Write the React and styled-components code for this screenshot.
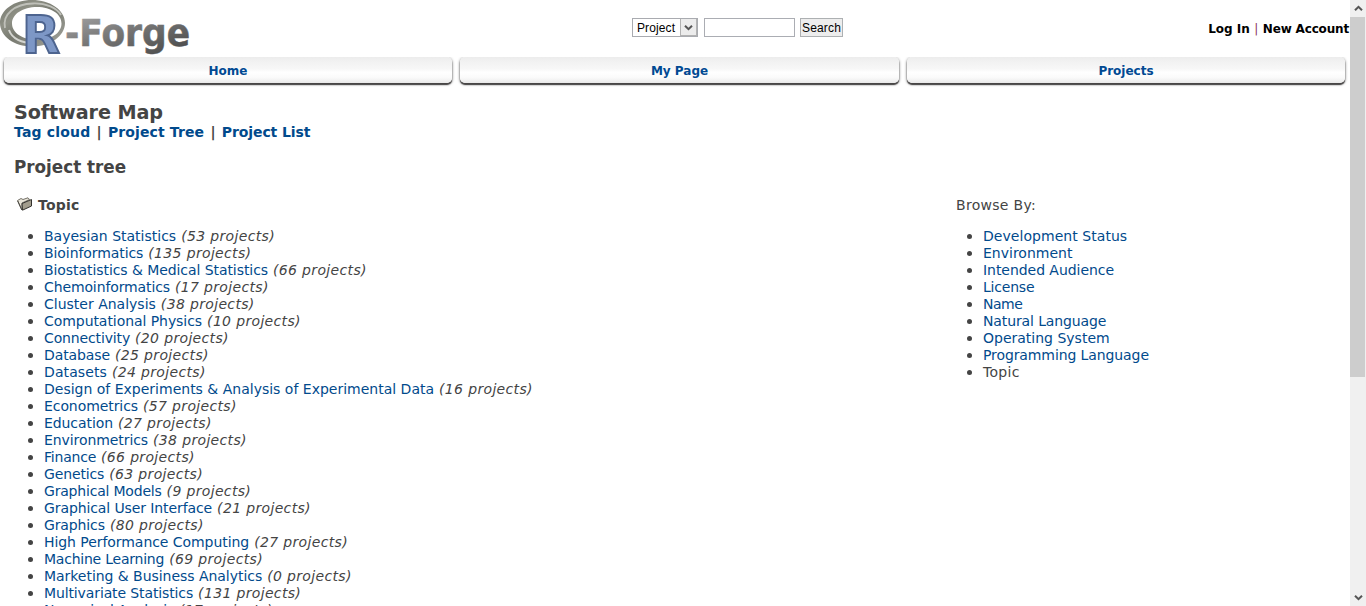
import React from "react";
import styled, { createGlobalStyle } from "styled-components";

const Global = createGlobalStyle`
  * { box-sizing: border-box; }
  html, body { margin: 0; padding: 0; overflow: hidden; background: #fff; }
`;

const Window = styled.div`
  display: flex;
  width: 1366px;
  height: 606px;
  overflow: hidden;
  color: #444;
  font: 14px/17px Verdana, "DejaVu Sans", sans-serif;
`;
const Page = styled.div`
  width: 1350px;
  height: 606px;
  overflow: hidden;
`;
const Header = styled.header`
  display: grid;
  grid-template-columns: 632px 1fr auto;
  height: 56px;
  align-items: center;
`;
const LogoArt = styled.svg`
  display: block;
  width: 200px;
  height: 56px;
`;
const SearchForm = styled.div`
  display: flex;
  align-self: start;
  margin-top: 18px;
  font: 12px/18px "Liberation Sans", Arial, sans-serif;
  color: #000;
`;
const Select = styled.div`
  display: flex;
  width: 66px;
  height: 19px;
  padding-left: 4px;
  border: 1px solid #a9abb0;
  letter-spacing: 0.12px;
  justify-content: space-between;
`;
const Arrow = styled.span`
  display: flex;
  width: 17px;
  height: 17px;
  align-items: center;
  justify-content: center;
  background: #ececec;
  border: 1px solid #b2b2b2;
  border-width: 0 1px 1px 1px;
`;
const Input = styled.div`
  width: 91px;
  height: 19px;
  margin: 0 5px 0 6px;
  border: 1px solid #abadb3;
`;
const Button = styled.div`
  width: 43px;
  height: 19px;
  border: 1px solid #adb0b2;
  background: #ededed;
  text-align: center;
  letter-spacing: 0.15px;
  white-space: nowrap;
`;
const Account = styled.div`
  display: flex;
  padding: 2px 1px 0 0;
  color: #000;
  font-size: 12px;
  white-space: nowrap;
  b:last-child { letter-spacing: -0.17px; }
  span { width: 13px; text-align: center; color: #8a3558; }
`;
const Nav = styled.nav`
  display: grid;
  grid-template-columns: 448px 439px 438px;
  column-gap: 8px;
  padding: 1px 0 0 4px;
  height: 31px;
`;
const NavTab = styled.a`
  height: 26px;
  border-radius: 5px;
  background: linear-gradient(#ececec 0, #f1f1f1 15%, #f7f7f7 45%, #fff 60%, #fafafa 80%, #e9e9e9 100%);
  box-shadow: 0 2px 1px #484646, 0 1px 3px #555;
  clip-path: inset(0 -4px -4px -4px);
  color: #014a93;
  font-size: 12px;
  font-weight: 700;
  line-height: 28px;
  text-align: center;
`;
const Content = styled.main`
  padding: 14px 14px 0;
`;
const Title = styled.h1`
  margin: 0;
  font-size: 19.2px;
  line-height: 23px;
  font-weight: 700;
  letter-spacing: -0.1px;
`;
const SubNav = styled.div`
  display: flex;
  font-weight: 700;
`;
const Divider = styled.span`
  width: 17.5px;
  text-align: center;
`;
const Link = styled.a`
  color: #014a8c;
  letter-spacing: ${(p) => p.$track || 0}px;
`;
const Count = styled.em`
  margin-left: 5px;
  letter-spacing: 0.34px;
`;
const Loose = styled.span`
  letter-spacing: 0.3px;
`;
const Heading = styled.h2`
  margin: 16px 0 0;
  font-size: 16.8px;
  line-height: 20px;
  font-weight: 700;
`;
const Columns = styled.div`
  display: grid;
  grid-template-columns: 942px 1fr;
  margin-top: 20px;
`;
const Topic = styled.div`
  display: flex;
  height: 17px;
  gap: 5px;
  padding-left: 3px;
  font-weight: 700;
  letter-spacing: 0.2px;
`;
const List = styled.ul`
  margin: 14px 0 0;
  padding: 0;
  list-style: none;
`;
const Item = styled.li`
  display: flex;
  align-items: center;
  height: 17px;
  padding-left: ${(p) => p.$indent}px;
  white-space: pre;
  &::before {
    content: "";
    flex: none;
    width: 5px;
    height: 5px;
    margin: 0 11px 0 0;
    border-radius: 50%;
    background: #444;
  }
`;
const ScrollBar = styled.div`
  display: flex;
  flex-direction: column;
  width: 16px;
  height: 606px;
  background: #f0f0f0;
`;
const ScrollButton = styled.div`
  display: flex;
  height: 17px;
  align-items: center;
  justify-content: center;
`;
const Thumb = styled.div`
  width: 15px;
  height: 360px;
  margin-bottom: auto;
  background: #cdcdcd;
`;

// name, number of projects, letter spacing
const topics = [
  ["Bayesian Statistics", 53, 0],
  ["Bioinformatics", 135, -0.08],
  ["Biostatistics & Medical Statistics", 66, -0.07],
  ["Chemoinformatics", 17, -0.12],
  ["Cluster Analysis", 38, 0],
  ["Computational Physics", 10, -0.06],
  ["Connectivity", 20, -0.14],
  ["Database", 25, -0.1],
  ["Datasets", 24, 0.1],
  ["Design of Experiments & Analysis of Experimental Data", 16, 0],
  ["Econometrics", 57, -0.08],
  ["Education", 27, -0.08],
  ["Environmetrics", 38, -0.08],
  ["Finance", 66, -0.22],
  ["Genetics", 63, -0.14],
  ["Graphical Models", 9, -0.2],
  ["Graphical User Interface", 21, -0.1],
  ["Graphics", 80, -0.12],
  ["High Performance Computing", 27, -0.06],
  ["Machine Learning", 69, -0.23],
  ["Marketing & Business Analytics", 0, -0.04],
  ["Multivariate Statistics", 131, -0.12],
  ["Numerical Analysis", 17, -0.2],
];
const categories = [
  ["Development Status", 0.05],
  ["Environment", 0],
  ["Intended Audience", -0.05],
  ["License", -0.2],
  ["Name", -0.5],
  ["Natural Language", -0.12],
  ["Operating System", 0],
  ["Programming Language", -0.1],
];

const Chevron = ({ up }) => (
  <svg width="9" height="7" viewBox="0 0 9 7">
    <path d={up ? "M1 5.3 4.5 1.8 8 5.3" : "M1 1.7 4.5 5.2 8 1.7"} fill="none" stroke="#555" strokeWidth="2" />
  </svg>
);

const Logo = () => (
  <LogoArt viewBox="0 0 200 56">
    <defs>
      <linearGradient id="ring" x1="0" y1="0" x2="1" y2="1">
        <stop offset="0" stopColor="#74766c" />
        <stop offset=".3" stopColor="#8f9186" />
        <stop offset=".5" stopColor="#77796f" />
        <stop offset="1" stopColor="#a5a69f" />
      </linearGradient>
      <linearGradient id="word" x1="0" y1="0" x2="1" y2="1">
        <stop offset="0" stopColor="#aaa" />
        <stop offset=".45" stopColor="#777" />
        <stop offset="1" stopColor="#444" />
      </linearGradient>
    </defs>
    <path
      fillRule="evenodd"
      fill="url(#ring)"
      d="M32 0C50 0 65 10 65 23S50 46.500 32 46.500 0 36 0 23 14 0 32 0ZM37 7C23 7 12 14 12 23.500S23 40 37 40 61.500 33 61.500 23.500 51 7 37 7Z"
    />
    <path d="M5 28C2 14 15 4 33 3.500 46 3 57 8 61 15" fill="none" stroke="#bfc0b9" strokeWidth="1.800" />
    <path d="M9 30C12 39 22 43 33 43" fill="none" stroke="#d4d5d0" strokeWidth="2" />
    <text x="22" y="53" fontFamily="DejaVu Sans, Verdana, sans-serif" fontWeight="700" fontSize="52" textLength="38" lengthAdjust="spacingAndGlyphs" fill="#7d97c6" stroke="#4d648f" strokeWidth="2">R</text>
    <text x="65" y="46" fontFamily="DejaVu Sans, Verdana, sans-serif" fontWeight="700" fontSize="36.500" textLength="125" lengthAdjust="spacingAndGlyphs" fill="url(#word)" stroke="url(#word)" strokeWidth=".5">-Forge</text>
  </LogoArt>
);

const Folder = () => (
  <svg width="16" height="15" viewBox="0 0 16 15">
    <path d="M.5 3.500 4 1.500 6 2.500 11 .8 12.500 2.500 5 6 5 13Z" fill="#e9e6da" stroke="#66635a" strokeWidth=".9" />
    <path d="M5 6.500 14.500 2.500V9L5.500 13.200Z" fill="#a29d8d" stroke="#33322e" strokeWidth="1" />
    <path d="M.7 4 4.800 13" stroke="#4a4842" />
  </svg>
);

export default function App() {
  return (
    <Window>
      <Global />
      <Page>
        <Header>
          <Logo />
          <SearchForm>
            <Select>
              Project
              <Arrow><Chevron /></Arrow>
            </Select>
            <Input />
            <Button>Search</Button>
          </SearchForm>
          <Account><b>Log In</b><span>|</span><b>New Account</b></Account>
        </Header>
        <Nav>
          <NavTab>Home</NavTab>
          <NavTab>My Page</NavTab>
          <NavTab>Projects</NavTab>
        </Nav>
        <Content>
          <Title>Software Map</Title>
          <SubNav>
            <Link $track={0.18}>Tag cloud</Link>
            <Divider>|</Divider>
            <Link $track={0.12}>Project Tree</Link>
            <Divider>|</Divider>
            <Link $track={-0.08}>Project List</Link>
          </SubNav>
          <Heading>Project tree</Heading>
          <Columns>
            <section>
              <Topic><Folder />Topic</Topic>
              <List>
                {topics.map(([name, count, track]) => (
                  <Item key={name} $indent={14}>
                    <Link $track={track}>{name}</Link><Count>({count} projects)</Count>
                  </Item>
                ))}
              </List>
            </section>
            <aside>
              <Loose>Browse By:</Loose>
              <List>
                {categories.map(([name, track]) => (
                  <Item key={name} $indent={11}><Link $track={track}>{name}</Link></Item>
                ))}
                <Item $indent={11}><Loose>Topic</Loose></Item>
              </List>
            </aside>
          </Columns>
        </Content>
      </Page>
      <ScrollBar>
        <ScrollButton><Chevron up /></ScrollButton>
        <Thumb />
        <ScrollButton><Chevron /></ScrollButton>
      </ScrollBar>
    </Window>
  );
}
